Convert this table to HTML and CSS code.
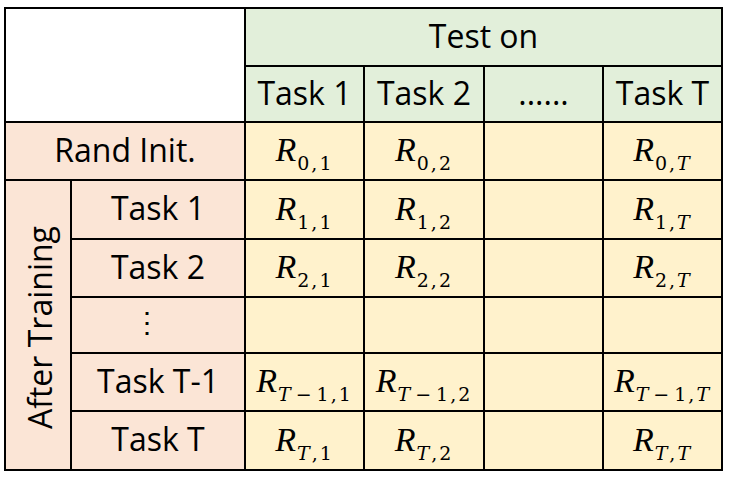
FILE: index.html
```html
<!DOCTYPE html>
<html>
<head>
<meta charset="utf-8">
<link rel="stylesheet" href="styles.css">
</head>
<body>
<div class="grid">
  <div class="cell corner"></div>
  <div class="cell head teston">Test on</div>
  <div class="cell head">Task 1</div>
  <div class="cell head">Task 2</div>
  <div class="cell head">......</div>
  <div class="cell head">Task T</div>

  <div class="cell row rand">Rand Init.</div>
  <div class="cell val"><span class="m">R<sub>0,1</sub></span></div>
  <div class="cell val"><span class="m">R<sub>0,2</sub></span></div>
  <div class="cell val"></div>
  <div class="cell val"><span class="m">R<sub>0,<i>T</i></sub></span></div>

  <div class="cell row after"><span class="vt">After Training</span></div>
  <div class="cell row">Task 1</div>
  <div class="cell val"><span class="m">R<sub>1,1</sub></span></div>
  <div class="cell val"><span class="m">R<sub>1,2</sub></span></div>
  <div class="cell val"></div>
  <div class="cell val"><span class="m">R<sub>1,<i>T</i></sub></span></div>

  <div class="cell row">Task 2</div>
  <div class="cell val"><span class="m">R<sub>2,1</sub></span></div>
  <div class="cell val"><span class="m">R<sub>2,2</sub></span></div>
  <div class="cell val"></div>
  <div class="cell val"><span class="m">R<sub>2,<i>T</i></sub></span></div>

  <div class="cell row vdots">⋮</div>
  <div class="cell val"></div>
  <div class="cell val"></div>
  <div class="cell val"></div>
  <div class="cell val"></div>

  <div class="cell row">Task T-1</div>
  <div class="cell val"><span class="m">R<sub><i>T</i><b class="op">−</b>1,1</sub></span></div>
  <div class="cell val"><span class="m">R<sub><i>T</i><b class="op">−</b>1,2</sub></span></div>
  <div class="cell val"></div>
  <div class="cell val"><span class="m">R<sub><i>T</i><b class="op">−</b>1,<i>T</i></sub></span></div>

  <div class="cell row">Task T</div>
  <div class="cell val"><span class="m">R<sub><i>T</i>,1</sub></span></div>
  <div class="cell val"><span class="m">R<sub><i>T</i>,2</sub></span></div>
  <div class="cell val"></div>
  <div class="cell val"><span class="m">R<sub><i>T</i>,<i>T</i></sub></span></div>
</div>
</body>
</html>
```

FILE: styles.css
```css
html, body {
  margin: 0;
  padding: 0;
  background: #ffffff;
}

body {
  font-family: "Open Sans", "Liberation Sans", sans-serif;
  color: #000;
}

.grid {
  margin: 7px 0 0 4px;
  width: max-content;
  display: grid;
  grid-template-columns: 64px 172px 117px 118px 117px 117px;
  grid-template-rows: 56px 54px 56px 57px 56px 54px 56px 57px;
  gap: 2px;
  padding: 2px;
  background: #000;
}

.cell {
  display: flex;
  align-items: center;
  justify-content: center;
  font-size: 32px;
  line-height: 1;
  white-space: nowrap;
}

.head,
.row {
  padding-bottom: 3px;
}

.corner {
  grid-column: 1 / 3;
  grid-row: 1 / 3;
  background: #fff;
}

.head {
  background: #e2efda;
}

.teston {
  grid-column: 3 / 7;
}

.row {
  background: #fbe5d6;
}

.rand {
  grid-column: 1 / 3;
}

.after {
  grid-row: 4 / 9;
  padding-bottom: 0;
  padding-top: 6px;
  padding-left: 4px;
}

.vt {
  writing-mode: vertical-rl;
  transform: rotate(180deg);
}

.vdots {
  padding-right: 22px;
  padding-bottom: 8px;
  font-size: 28px;
}

.val {
  background: #fff2cc;
}

.m {
  font-family: "Liberation Serif", "DejaVu Serif", serif;
  font-style: italic;
  font-size: 34px;
  line-height: 1;
  margin-top: -2px;
}

.m sub {
  font-family: "DejaVu Serif", "Liberation Serif", serif;
  font-style: normal;
  font-size: 19px;
  letter-spacing: 2px;
  vertical-align: -9px;
  line-height: 0;
  margin-left: 1px;
}

.m sub i {
  font-style: italic;
}

.m sub .op {
  font-weight: normal;
  margin: 0 3px;
}
```
